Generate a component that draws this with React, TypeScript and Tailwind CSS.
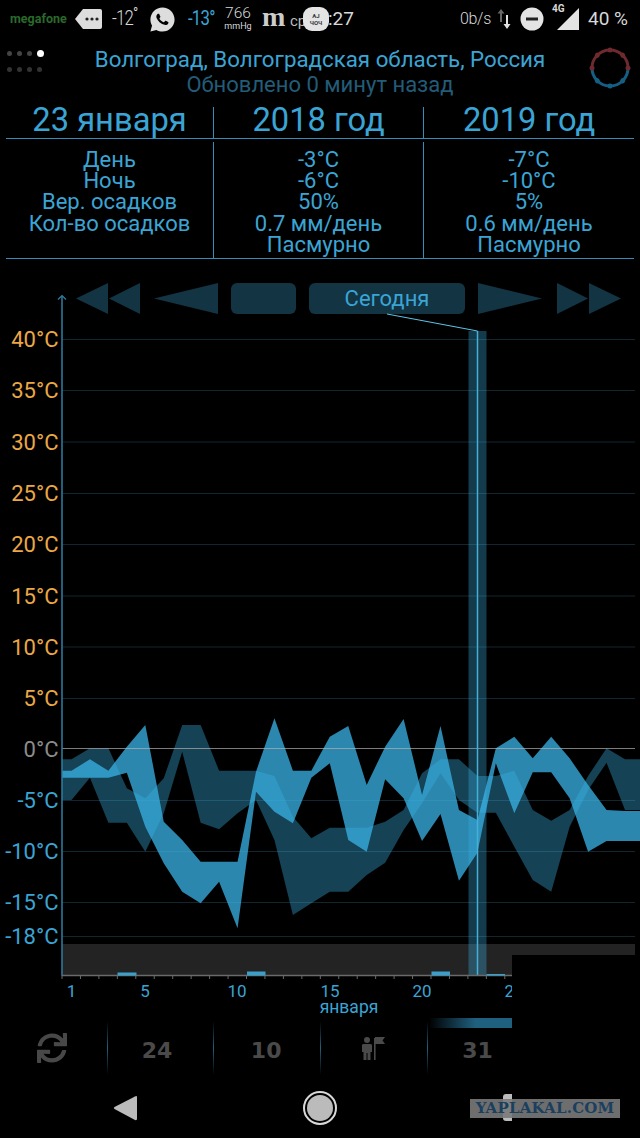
import React from 'react';
import { FaSync } from 'react-icons/fa';
import { RiWhatsappFill } from 'react-icons/ri';

// band edges per day, 1..31, read off the reference
const lightTop = [212, 178, 212, 140, 75, 365, 420, 485, 485, 485, 215, 55, 212, 212, 110, 78, 255, 140, 57, 285, 78, 330, 360, 145, 110, 175, 110, 175, 255, 330, 333];
const lightBottom = [233, 233, 233, 218, 380, 490, 575, 610, 545, 685, 275, 335, 370, 233, 190, 420, 455, 238, 295, 423, 342, 542, 458, 190, 340, 217, 217, 295, 455, 423, 423];
const darkTop = [178, 145, 145, 265, 295, 235, 75, 75, 212, 212, 212, 228, 350, 415, 383, 383, 383, 365, 330, 220, 178, 178, 228, 228, 212, 330, 362, 330, 228, 145, 178];
const darkBottom = [300, 233, 368, 368, 455, 340, 155, 368, 388, 340, 300, 420, 645, 610, 575, 575, 525, 488, 390, 310, 220, 300, 338, 338, 440, 540, 575, 380, 270, 188, 330];

const dayX = (i: number) => 71.5 + i * 18.45;
const zy = (v: number) => 700 + v / 3;

const edge = (vals: number[]) => [
  [62, zy(vals[0])],
  ...vals.map((v, i) => [dayX(i), zy(v)]),
  [640, zy(vals[vals.length - 1])],
];

const band = (top: number[], bottom: number[]) =>
  [...edge(top), ...edge(bottom).reverse()].map((p) => `${p[0]},${p[1]}`).join(' ');

const yLabels = [
  { t: '40°C', y: 339, c: '#EBA845' },
  { t: '35°C', y: 390, c: '#EBA845' },
  { t: '30°C', y: 441.5, c: '#EBA845' },
  { t: '25°C', y: 493, c: '#EBA845' },
  { t: '20°C', y: 544, c: '#EBA845' },
  { t: '15°C', y: 595.5, c: '#EBA845' },
  { t: '10°C', y: 646.5, c: '#EBA845' },
  { t: '5°C', y: 698, c: '#EBA845' },
  { t: '0°C', y: 748.5, c: '#8c8c8c' },
  { t: '-5°C', y: 800, c: '#3AA5D5' },
  { t: '-10°C', y: 851, c: '#3AA5D5' },
  { t: '-15°C', y: 902, c: '#3AA5D5' },
  { t: '-18°C', y: 936, c: '#3AA5D5' },
];

const xLabels = [
  { t: '1', x: 71.5 },
  { t: '5', x: 145 },
  { t: '10', x: 237 },
  { t: '15', x: 330 },
  { t: '20', x: 422 },
  { t: '25', x: 514 },
];

const rows = [
  ['День', '-3°C', '-7°C'],
  ['Ночь', '-6°C', '-10°C'],
  ['Вер. осадков', '50%', '5%'],
  ['Кол-во осадков', '0.7 мм/день', '0.6 мм/день'],
  ['', 'Пасмурно', 'Пасмурно'],
];

const Triangle = ({ w, left }: { w: number; left?: boolean }) => (
  <svg width={w} height={31} viewBox={`0 0 ${w} 31`} className="block shrink-0">
    <polygon points={left ? `0,15.5 ${w},0 ${w},31` : `0,0 ${w},15.5 0,31`} fill="#133443" />
  </svg>
);

const StatusBar = () => (
  <div className="flex items-center h-[38px] shrink-0 text-[#d8d8d8]">
    <span className="ml-[10px] w-[65px] shrink-0 text-[12.5px] font-bold text-[#2b6a2b]">megafone</span>
    <svg width="27" height="20" viewBox="0 0 27 20" className="shrink-0">
      <path d="M8 0H25a2 2 0 0 1 2 2V18a2 2 0 0 1-2 2H8L0 10Z" fill="#dddddd" />
      <circle cx="12" cy="10" r="1.6" fill="#222" />
      <circle cx="17" cy="10" r="1.6" fill="#222" />
      <circle cx="22" cy="10" r="1.6" fill="#222" />
    </svg>
    <span className="ml-[10px] w-[21px] shrink-0 text-[21px] font-light tracking-[-1px] scale-x-[0.8] origin-left whitespace-nowrap">-12</span>
    <span className="w-[15px] shrink-0 -mt-[12px] text-[14px]">°</span>
    <RiWhatsappFill className="w-[29px] h-[29px] shrink-0 text-[#dddddd]" />
    <span className="ml-[11px] w-[24px] shrink-0 text-[21px] tracking-[-1px] scale-x-[0.8] origin-left text-[#3AA5D5] whitespace-nowrap">-13°</span>
    <div className="ml-[11px] w-[30px] shrink-0 flex flex-col items-center">
      <span className="text-[15.5px] leading-[15px] font-light">766</span>
      <span className="text-[9px] leading-[11px]">mmHg</span>
    </div>
    <span className="ml-[9px] w-[26px] shrink-0 text-[28px] leading-none -mt-[4px] font-bold font-['Liberation_Serif',serif] text-[#cccccc]">m</span>
    <span className="ml-[2px] mt-[4px] w-[15px] shrink-0 text-[15px] text-[#bbbbbb]">ср</span>
    <div className="-ml-[2px] w-[26px] h-[24px] shrink-0 bg-[#e4e4e4] rounded-[9px] flex flex-col items-center justify-center text-[#333] text-[6px] leading-[7px] font-bold">
      <span>AJ</span>
      <span>ЧОЧ</span>
    </div>
    <span className="-ml-px shrink-0 text-[19px]">:27</span>
    <span className="ml-[106px] w-[36px] shrink-0 text-[16px] tracking-[-0.3px] font-light">0b/s</span>
    <svg width="16" height="20" viewBox="0 0 16 20" className="shrink-0 ml-[0px]">
      <path d="M5 0 8.500 4.500H6V13H4V4.500H1.500Z" fill="#666666" />
      <path d="M11 20 7.500 15H10V6H12V15H14.500Z" fill="#e0e0e0" />
    </svg>
    <svg width="24" height="24" viewBox="0 0 24 24" className="shrink-0 ml-[8px]">
      <circle cx="12" cy="12" r="11.500" fill="#e4e4e4" />
      <rect x="6" y="10.500" width="12" height="3" fill="#222222" />
    </svg>
    <div className="relative w-[30px] h-[26px] ml-[7px] -mt-[4px] shrink-0">
      <svg width="30" height="26" viewBox="0 0 30 26" className="block">
        <polygon points="28,4 28,26 6,26" fill="#e4e4e4" />
      </svg>
      <span className="absolute left-px top-0 text-[10px] leading-[10px] font-bold">4G</span>
    </div>
    <span className="ml-[7px] shrink-0 text-[19px] whitespace-nowrap">40 %</span>
  </div>
);

const Header = () => (
  <div className="grid grid-cols-[1fr_450px_1fr] h-[69px] shrink-0">
    <div className="pl-[7px] pt-[12px] flex flex-col gap-[10px]">
      <div className="flex items-center gap-[5px]">
        <span className="w-[5px] h-[5px] rounded-full bg-[#444444]" />
        <span className="w-[5px] h-[5px] rounded-full bg-[#444444]" />
        <span className="w-[5px] h-[5px] rounded-full bg-[#444444]" />
        <span className="w-[7px] h-[7px] rounded-full bg-white" />
      </div>
      <div className="flex items-center gap-[5px]">
        <span className="w-[5px] h-[5px] rounded-full bg-[#333333]" />
        <span className="w-[5px] h-[5px] rounded-full bg-[#333333]" />
        <span className="w-[5px] h-[5px] rounded-full bg-[#333333]" />
        <span className="w-[5px] h-[5px] rounded-full bg-[#333333]" />
      </div>
    </div>
    <div className="flex flex-col items-center pt-[9px] whitespace-nowrap">
      <span className="text-[22.3px] leading-[25px] text-[#3AA5D5]">Волгоград, Волгоградская область, Россия</span>
      <span className="text-[22px] leading-[25px] text-[#225C78]">Обновлено 0 минут назад</span>
    </div>
    <div className="flex justify-end pr-[9px] pt-[9px]">
      <svg width="42" height="42" viewBox="0 0 42 42" className="block">
        <path d="M3 21A18 18 0 0 1 39 21" fill="none" stroke="#6E2A2E" strokeWidth="3" />
        <path d="M3 21A18 18 0 0 0 39 21" fill="none" stroke="#155F85" strokeWidth="3" />
        {[-90, -45, 0, 45, 90].map((a) => (
          <circle key={a} cx="21" cy="3" r="2.500" fill="#6E2A2E" transform={`rotate(${a} 21 21)`} />
        ))}
        {[135, 180, 225].map((a) => (
          <circle key={a} cx="21" cy="3" r="2.500" fill="#155F85" transform={`rotate(${a} 21 21)`} />
        ))}
      </svg>
    </div>
  </div>
);

const Table = () => (
  <div className="mx-[6px] w-[628px] h-[152px] shrink-0 border-b border-[#348DB8] grid grid-cols-[208px_210px_210px] text-[#3AA5D5] text-center whitespace-nowrap">
    <div className="h-[32px] border-b border-[#348DB8] border-r text-[32.7px] leading-[27px]">23 января</div>
    <div className="h-[32px] border-b border-[#348DB8] border-r text-[32.7px] leading-[27px]">2018 год</div>
    <div className="h-[32px] border-b border-[#348DB8] text-[32.7px] leading-[27px]">2019 год</div>
    {[0, 1, 2].map((col) => (
      <div
        key={col}
        className={`pt-[7px] text-[22px] leading-[21.3px] ${col < 2 ? 'border-r border-[#348DB8]' : ''}`}
      >
        {rows.map((r, i) => (
          <div key={i} className="h-[21.3px]">{r[col]}</div>
        ))}
      </div>
    ))}
  </div>
);

const NavRow = () => (
  <div className="mt-[24px] h-[31px] shrink-0 flex items-center pl-[76px] text-[#3AA5D5]">
    <Triangle w={32} left />
    <div className="ml-px"><Triangle w={31} left /></div>
    <div className="ml-[14px]"><Triangle w={64} left /></div>
    <div className="ml-[13px] w-[65px] h-[31px] rounded-[6px] bg-[#133443]" />
    <div className="ml-[13px] w-[156px] h-[31px] rounded-[6px] bg-[#133443] flex items-center justify-center text-[22px]">Сегодня</div>
    <div className="ml-[13px]"><Triangle w={64} /></div>
    <div className="ml-[15px]"><Triangle w={31} /></div>
    <div className="ml-px"><Triangle w={32} /></div>
  </div>
);

const Chart = () => (
  <svg width="640" height="726" viewBox="0 292 640 726" className="block -mt-[22px] shrink-0" fontFamily="Roboto, sans-serif">
    {yLabels.map((l) =>
      l.t === '0°C' ? null : <line key={l.t} x1="62" x2="635" y1={l.y + 0.5} y2={l.y + 0.5} stroke="#12262F" />
    )}
    <rect x="62" y="944" width="573" height="31" fill="#232323" />
    <polygon points={band(darkTop, darkBottom)} fill="#39B4E7" fillOpacity="0.37" />
    <polygon points={band(lightTop, lightBottom)} fill="#39B4E7" fillOpacity="0.75" />
    <line x1="62" x2="635" y1="748.500" y2="748.500" stroke="#B0B0B0" strokeOpacity="0.7" />
    <rect x="468.500" y="331" width="18" height="644" fill="#39B4E7" fillOpacity="0.33" />
    <line x1="477.500" x2="477.500" y1="331" y2="975" stroke="#45AFD8" strokeWidth="1.500" />
    <polyline points="387,314 477.500,331" fill="none" stroke="#5CC5E8" strokeWidth="1" />
    <line x1="62" x2="62" y1="296" y2="976" stroke="#2F7EA3" strokeWidth="1.500" />
    <polyline points="58,299.500 62,295.500 66,299.500" fill="none" stroke="#2F7EA3" strokeWidth="1.200" />
    <line x1="62" x2="635" y1="975.500" y2="975.500" stroke="#6A6A6A" strokeWidth="1.500" />
    {Array.from({ length: 25 }, (_, i) => (
      <line key={i} x1={62 + i * 18.45} x2={62 + i * 18.45} y1="976" y2="979" stroke="#6A6A6A" />
    ))}
    <rect x="117.500" y="972.500" width="19" height="3" fill="#3A9FC9" />
    <rect x="247" y="971.500" width="18.500" height="4" fill="#3A9FC9" />
    <rect x="431.500" y="971.500" width="18.500" height="4" fill="#3A9FC9" />
    <rect x="486.500" y="974" width="18.500" height="1.500" fill="#3A9FC9" />
    {yLabels.map((l) => (
      <text key={l.t} x="58.500" y={l.y + 8} textAnchor="end" fontSize="22" fill={l.c}>{l.t}</text>
    ))}
    {xLabels.map((l) => (
      <text key={l.t} x={l.x} y="997" textAnchor="middle" fontSize="17" fill="#3AA5D5">{l.t}</text>
    ))}
    <text x="349" y="1013" textAnchor="middle" fontSize="17.500" fill="#3AA5D5">января</text>
  </svg>
);

const Divider = () => (
  <span className="absolute left-0 top-[2px] w-px h-[54px] bg-gradient-to-b from-transparent via-[#22607C] to-transparent" />
);

const Tabs = () => (
  <div className="grid grid-cols-6 h-[58px] mt-px shrink-0 font-['DejaVu_Sans',sans-serif] font-bold text-[22px] text-[#4A4A4A]">
    <div className="flex items-center justify-center pr-[2px]">
      <FaSync className="w-[30px] h-[30px] text-[#484848]" />
    </div>
    <div className="relative flex items-center justify-center pr-[6px] pt-[4px]"><Divider />24</div>
    <div className="relative flex items-center justify-center pr-[1px] pt-[4px]"><Divider />10</div>
    <div className="relative flex items-center justify-center">
      <Divider />
      <svg width="24" height="24" viewBox="0 0 24 24" className="block">
        <circle cx="6" cy="4" r="3" fill="#4A4A4A" />
        <path d="M1 9Q1 8 3 8H9Q11 8 11 9V16H9.500V24H6.500V17H5.500V24H2.500V16H1Z" fill="#4A4A4A" />
        <rect x="13" y="2" width="1.600" height="22" fill="#4A4A4A" />
        <path d="M14 1 24 1 21.500 4.500 24 8 14 8Z" fill="#4A4A4A" />
      </svg>
    </div>
    <div className="relative flex items-center justify-center pr-[5px] pt-[4px]">
      <Divider />
      <span className="absolute left-[2px] -top-[1px] w-[85px] h-[10px] bg-gradient-to-r from-transparent to-[#20607F] to-[55%]" />
      31
    </div>
    <div />
  </div>
);

const NavBar = () => (
  <div className="mt-[8px] h-[45px] flex items-center justify-center gap-[166px]">
    <svg width="24" height="26" viewBox="0 0 24 26" className="block shrink-0">
      <path d="M22 1.500 1.500 12Q0 13 1.500 14L22 25Q24 25.500 24 24V2Q24 .5 22 1.500Z" fill="#BBBBBB" />
    </svg>
    <div className="w-[34px] h-[34px] rounded-full border-2 border-[#D8D8D8] flex items-center justify-center shrink-0">
      <div className="w-[26px] h-[26px] rounded-full bg-[#BBBBBB]" />
    </div>
    <div className="w-[24px] h-[27px] rounded-[3px] bg-[#BBBBBB] shrink-0" />
  </div>
);

export default function App() {
  return (
    <div className="relative w-[640px] h-[1138px] bg-black overflow-hidden flex flex-col font-['Roboto',sans-serif]">
      <StatusBar />
      <Header />
      <Table />
      <NavRow />
      <Chart />
      <Tabs />
      <NavBar />
      {/* censored corner and site watermark sit over everything */}
      <div className="absolute left-[512px] top-[955px] right-0 bottom-0 bg-black" />
      <div className="absolute left-[470px] top-[1099px] w-[150px] h-[19px] bg-[#7A7A7A]/90 flex items-center justify-center font-['DejaVu_Serif',serif] font-bold text-[15px] tracking-[0.2px] text-[#1B3F5E]">
        YAPLAKAL.COM
      </div>
    </div>
  );
}
